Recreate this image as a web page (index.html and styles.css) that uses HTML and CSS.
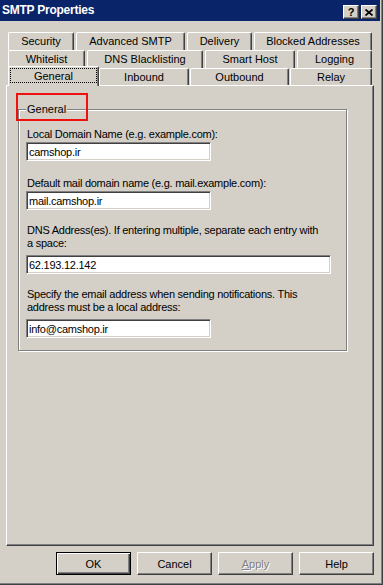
FILE: index.html
```html
<!DOCTYPE html>
<html>
<head>
<meta charset="utf-8">
<link rel="stylesheet" href="styles.css">
</head>
<body>
<div class="window">
  <div class="titlebar">
    <span class="title">SMTP Properties</span>
    <div class="caption-btns">
      <span class="cbtn q">?</span>
      <span class="cbtn x"><svg width="8" height="7" viewBox="0 0 8 7"><path d="M0.5 0.5 L7.5 6.5 M7.5 0.5 L0.5 6.5" stroke="#000" stroke-width="1.7" fill="none"/></svg></span>
    </div>
  </div>
  <div class="client">
    <div class="tabs">
      <div class="row">
        <div class="tab w-sec">Security</div>
        <div class="tab w-adv">Advanced SMTP</div>
        <div class="tab w-del">Delivery</div>
        <div class="tab w-blk last">Blocked Addresses</div>
      </div>
      <div class="row">
        <div class="tab w-wl">Whitelist</div>
        <div class="tab w-dns">DNS Blacklisting</div>
        <div class="tab w-sh">Smart Host</div>
        <div class="tab w-log last">Logging</div>
      </div>
      <div class="row row3">
        <div class="tab sel w-gen"><span class="focus">General</span></div>
        <div class="tab w-in">Inbound</div>
        <div class="tab w-out">Outbound</div>
        <div class="tab w-rel last">Relay</div>
      </div>
    </div>
    <div class="panel">
      <div class="group">
        <span class="legend">General</span>
        <span class="lbl first">Local Domain Name (e.g. example.com):</span>
        <input class="edit" type="text" value="camshop.ir">
        <span class="lbl l2">Default mail domain name (e.g. mail.example.com):</span>
        <input class="edit" type="text" value="mail.camshop.ir">
        <span class="lbl l3">DNS Address(es). If entering multiple, separate each entry with<br>a space:</span>
        <input class="edit wide gap5" type="text" value="62.193.12.142">
        <span class="lbl l3">Specify the email address when sending notifications. This<br>address must be a local address:</span>
        <input class="edit gap5" type="text" value="info@camshop.ir">
      </div>
    </div>
    <div class="buttons">
      <div class="btn default">OK</div>
      <div class="btn">Cancel</div>
      <div class="btn disabled"><span><u>A</u>pply</span></div>
      <div class="btn">Help</div>
    </div>
  </div>
  <div class="annot"></div>
</div>
</body>
</html>
```
FILE: styles.css
```css
html, body {
  margin: 0;
  padding: 0;
  background: #d4d0c8;
}
body {
  font-family: "Liberation Sans", Arial, sans-serif;
  font-size: 11px;
  color: #000;
}
.window {
  position: relative;
  width: 383px;
  height: 585px;
  box-sizing: border-box;
  padding-right: 3px;
  background: #d4d0c8;
  box-shadow: inset -1px -1px #404040, inset -2px -2px #808080;
}
.titlebar {
  height: 21px;
  background: #0a246a;
  display: flex;
  justify-content: space-between;
  align-items: flex-start;
  padding: 0 3px 0 2px;
}
.title {
  color: #fff;
  font-weight: bold;
  font-size: 12px;
  letter-spacing: -0.25px;
  line-height: 21px;
}
.caption-btns {
  display: flex;
  gap: 2px;
  margin-top: 5px;
}
.cbtn {
  box-sizing: border-box;
  width: 16px;
  height: 14px;
  background: #d4d0c8;
  border: 1px solid;
  border-color: #fff #404040 #404040 #fff;
  box-shadow: inset -1px -1px #808080;
  display: flex;
  align-items: center;
  justify-content: center;
  font-weight: bold;
  font-size: 11px;
  line-height: 12px;
}
.client {
  padding: 11px 0 0 6px;
}
.tabs {
  margin-left: 2px;
  width: 364px;
}
.row {
  display: flex;
  height: 18px;
  align-items: flex-start;
}
.row3 {
  height: 17px;
}
.tab {
  box-sizing: border-box;
  height: 18px;
  border-top: 1px solid #fff;
  border-left: 1px solid #fff;
  border-right: 1px solid #404040;
  border-radius: 2px 2px 0 0;
  box-shadow: inset -1px 0 #808080;
  text-align: center;
  line-height: 17px;
  white-space: nowrap;
  margin-right: 2px;
  background: #d4d0c8;
}
.tab.last {
  margin-right: 0;
}
.row3 .tab {
  height: 17px;
  line-height: 16px;
}
.row3 .tab.sel {
  position: relative;
  z-index: 1;
  height: 20px;
  margin-top: -2px;
  margin-right: 0;
}
.focus {
  position: absolute;
  left: 1px;
  top: 1px;
  right: 1px;
  bottom: 3px;
  border: 1px dotted #000;
  line-height: 14px;
}
.w-sec { width: 66px; }
.w-adv { width: 109px; }
.w-del { width: 65px; }
.w-blk { width: 118px; }
.w-wl { width: 77px; }
.w-dns { width: 116px; }
.w-sh { width: 90px; }
.w-log { width: 75px; }
.w-gen { width: 91px; }
.w-in { width: 90px; margin-right: 1px; }
.w-out { width: 99px; margin-right: 1px; }
.w-rel { width: 82px; }
.panel {
  box-sizing: border-box;
  width: 368px;
  height: 461px;
  border: 1px solid;
  border-color: #fff #404040 #404040 #fff;
  box-shadow: inset -1px -1px #808080;
  padding: 23px 0 0 11px;
}
.group {
  box-sizing: border-box;
  width: 329px;
  height: 242px;
  border: 1px solid #808080;
  box-shadow: inset 1px 1px #fff, 1px 1px #fff;
  padding: 0 0 0 7px;
}
.legend {
  display: block;
  width: max-content;
  margin-top: -7px;
  padding: 0 1px;
  background: #d4d0c8;
  line-height: 13px;
}
.lbl {
  display: block;
  margin-left: 1px;
  line-height: 13px;
  letter-spacing: -0.25px;
  white-space: nowrap;
}
.lbl.first { margin-top: 12px; }
.lbl.l2 { margin-top: 16px; }
.lbl.l3 { margin-top: 14px; }
.edit {
  display: block;
  box-sizing: border-box;
  width: 185px;
  height: 19px;
  margin: 1px 0 0 0;
  padding: 0 0 0 2px;
  border: 1px solid;
  border-color: #808080 #fff #fff #808080;
  box-shadow: inset 1px 1px #404040, inset -1px -1px #d4d0c8;
  background: #fff;
  font-family: "Liberation Sans", Arial, sans-serif;
  font-size: 11px;
  letter-spacing: -0.25px;
  color: #000;
  outline: none;
}
.edit.wide { width: 305px; }
.edit.gap5 { margin-top: 5px; }
.buttons {
  display: flex;
  justify-content: flex-end;
  gap: 6px;
  width: 368px;
  margin-top: 6px;
}
.btn {
  box-sizing: border-box;
  width: 75px;
  height: 23px;
  border: 1px solid;
  border-color: #fff #404040 #404040 #fff;
  box-shadow: inset -1px -1px #808080;
  display: flex;
  align-items: center;
  justify-content: center;
}
.btn.default {
  border-color: #000;
  box-shadow: inset 1px 1px #fff, inset -1px -1px #404040, inset -2px -2px #808080;
}
.btn.disabled {
  color: #808080;
  text-shadow: 1px 1px #fff;
}
.annot {
  position: absolute;
  left: 16px;
  top: 93px;
  width: 72px;
  height: 28px;
  box-sizing: border-box;
  border: 2px solid #f01010;
}
```
